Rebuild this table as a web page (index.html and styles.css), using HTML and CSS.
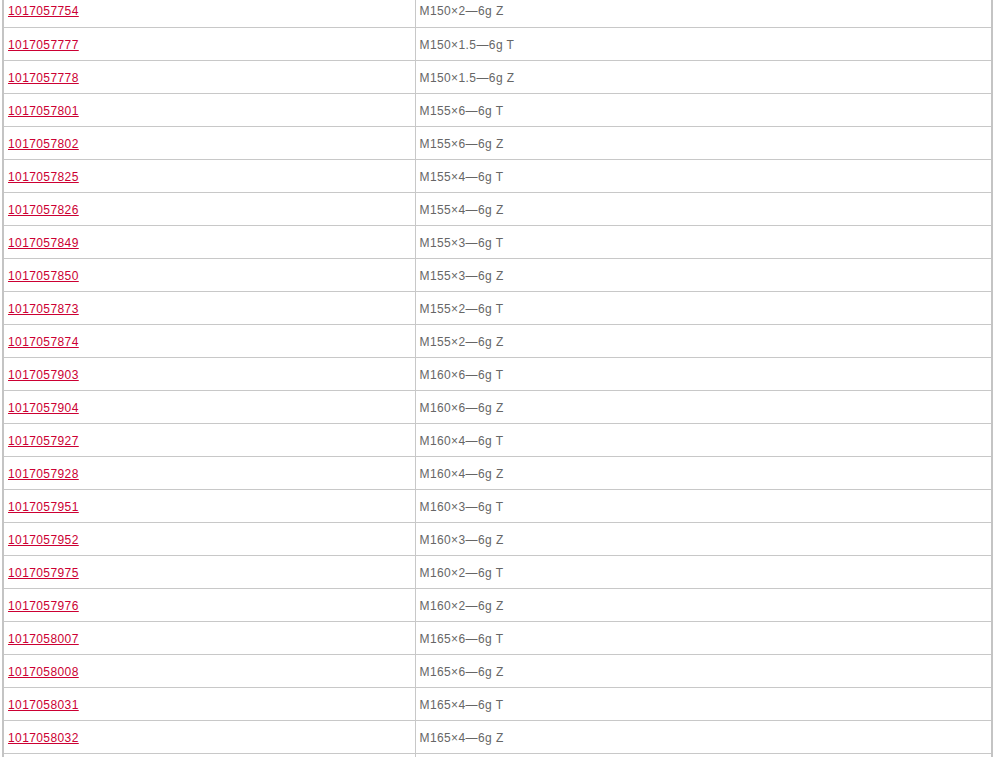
FILE: index.html
```html
<!DOCTYPE html>
<html>
<head>
<meta charset="utf-8">
<link rel="stylesheet" href="styles.css">
</head>
<body>
<table class="list">
<tbody>
<tr><td class="code"><a href="#">1017057754</a></td><td class="spec">M150×2—6g Z</td></tr>
<tr><td class="code"><a href="#">1017057777</a></td><td class="spec">M150×1.5—6g T</td></tr>
<tr><td class="code"><a href="#">1017057778</a></td><td class="spec">M150×1.5—6g Z</td></tr>
<tr><td class="code"><a href="#">1017057801</a></td><td class="spec">M155×6—6g T</td></tr>
<tr><td class="code"><a href="#">1017057802</a></td><td class="spec">M155×6—6g Z</td></tr>
<tr><td class="code"><a href="#">1017057825</a></td><td class="spec">M155×4—6g T</td></tr>
<tr><td class="code"><a href="#">1017057826</a></td><td class="spec">M155×4—6g Z</td></tr>
<tr><td class="code"><a href="#">1017057849</a></td><td class="spec">M155×3—6g T</td></tr>
<tr><td class="code"><a href="#">1017057850</a></td><td class="spec">M155×3—6g Z</td></tr>
<tr><td class="code"><a href="#">1017057873</a></td><td class="spec">M155×2—6g T</td></tr>
<tr><td class="code"><a href="#">1017057874</a></td><td class="spec">M155×2—6g Z</td></tr>
<tr><td class="code"><a href="#">1017057903</a></td><td class="spec">M160×6—6g T</td></tr>
<tr><td class="code"><a href="#">1017057904</a></td><td class="spec">M160×6—6g Z</td></tr>
<tr><td class="code"><a href="#">1017057927</a></td><td class="spec">M160×4—6g T</td></tr>
<tr><td class="code"><a href="#">1017057928</a></td><td class="spec">M160×4—6g Z</td></tr>
<tr><td class="code"><a href="#">1017057951</a></td><td class="spec">M160×3—6g T</td></tr>
<tr><td class="code"><a href="#">1017057952</a></td><td class="spec">M160×3—6g Z</td></tr>
<tr><td class="code"><a href="#">1017057975</a></td><td class="spec">M160×2—6g T</td></tr>
<tr><td class="code"><a href="#">1017057976</a></td><td class="spec">M160×2—6g Z</td></tr>
<tr><td class="code"><a href="#">1017058007</a></td><td class="spec">M165×6—6g T</td></tr>
<tr><td class="code"><a href="#">1017058008</a></td><td class="spec">M165×6—6g Z</td></tr>
<tr><td class="code"><a href="#">1017058031</a></td><td class="spec">M165×4—6g T</td></tr>
<tr><td class="code"><a href="#">1017058032</a></td><td class="spec">M165×4—6g Z</td></tr>
<tr><td class="code"></td><td class="spec"></td></tr>
</tbody>
</table>
</body>
</html>
```
FILE: styles.css
```css
html, body {
  margin: 0;
  padding: 0;
  background: #fff;
  overflow: hidden;
}
.list {
  margin: -6px 0 0 2px;
  width: 991px;
  border-collapse: collapse;
  border-left: 2px solid #c4c4c4;
  border-right: 2px solid #c4c4c4;
  font-family: "Liberation Sans", Arial, sans-serif;
  font-size: 12px;
  letter-spacing: 0.4px;
}
.list td {
  height: 33px;
  padding: 2px 0 0 4px;
  vertical-align: middle;
  border-bottom: 1px solid #c8c8c8;
  box-sizing: border-box;
}
.list td.code {
  width: 412px;
  border-right: 1px solid #c8c8c8;
}
.list td.spec {
  color: #666;
}
.list a {
  color: #cc0033;
  text-decoration: underline;
}
```
